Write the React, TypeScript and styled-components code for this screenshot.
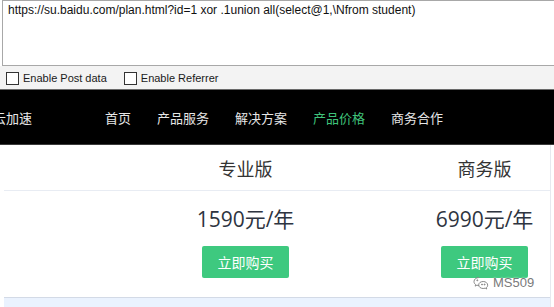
import React from "react";
import styled, { createGlobalStyle } from "styled-components";

const GlobalStyle = createGlobalStyle`
  html, body {
    margin: 0;
    padding: 0;
    background: #fff;
    overflow: hidden;
  }
  body {
    width: 554px;
    height: 307px;
    font-family: "Liberation Sans", "Noto Sans CJK SC", sans-serif;
  }
`;

const Page = styled.div`
  width: 554px;
  height: 307px;
  overflow: hidden;
  display: flex;
  flex-direction: column;
`;

const UrlBox = styled.div`
  height: 66px;
  margin-left: 2px;
  border: 1px solid #a8a8a8;
  border-right: none;
  background: #fff;
  padding: 2px 5px;
  font-size: 12px;
  line-height: 14px;
  color: #111;
  white-space: nowrap;
  box-sizing: border-box;
`;

const Options = styled.div`
  height: 24px;
  background: #f3f3f3;
  display: flex;
  align-items: center;
  gap: 17px;
  padding: 1px 0 0 6px;
  border-bottom: 1px solid #6a6a6a;
  box-sizing: border-box;
`;

const Check = styled.label`
  display: flex;
  align-items: center;
  gap: 4px;
  font-size: 11px;
  color: #1a1a1a;
`;

const Box = styled.span`
  width: 11px;
  height: 11px;
  border: 1px solid #333;
  background: #fff;
`;

const Nav = styled.nav`
  height: 55px;
  background: #000;
  display: flex;
  align-items: center;
  border-bottom: 1px solid #3a3a3a;
  box-sizing: border-box;
  font-family: "Noto Sans CJK SC", sans-serif;
  font-size: 13px;
`;

const Logo = styled.div`
  margin-left: -7px;
  color: #e8e8e8;
  width: 112px;
`;

const NavList = styled.div`
  display: flex;
  gap: 26px;
`;

const NavItem = styled.span<{ $active?: boolean }>`
  color: ${(p) => (p.$active ? "#3fc37b" : "#e6e6e6")};
`;

const Table = styled.div`
  position: relative;
  flex: 1;
  margin-left: 4px;
  width: 546px;
  border-right: 1px solid #e6e9ef;
  overflow: hidden;
  font-family: "Noto Sans CJK SC", sans-serif;
`;

const Row = styled.div<{ $h: number; $line?: boolean; $top?: boolean }>`
  display: grid;
  grid-template-columns: 122px 239px 239px;
  height: ${(p) => p.$h}px;
  align-items: ${(p) => (p.$top ? "start" : "center")};
  padding-top: ${(p) => (p.$top ? "1px" : "0")};
  border-bottom: ${(p) => (p.$line ? "1px solid #e8ecf3" : "none")};
  box-sizing: border-box;
`;

const Cell = styled.div`
  display: flex;
  justify-content: center;
  align-items: center;
`;

const Title = styled.div`
  font-size: 18px;
  color: #333;
`;

const Price = styled.div`
  font-size: 21px;
  color: #2e3440;
  font-family: "Open Sans", "Noto Sans CJK SC", sans-serif;
`;

const BuyButton = styled.button`
  width: 87px;
  height: 32px;
  border: none;
  border-radius: 2px;
  background: #3ec97f;
  color: #fff;
  font-family: "Noto Sans CJK SC", sans-serif;
  font-size: 14px;
  padding: 0;
`;

const Band = styled.div`
  height: 11px;
  border-top: 1px solid #d3dae6;
  background: #eaf2fe;
`;

const Watermark = styled.div`
  position: absolute;
  left: 469px;
  top: 130px;
  display: flex;
  align-items: center;
  gap: 4px;
  font-family: "Liberation Sans", sans-serif;
  font-size: 13px;
  color: #7a7a7a;
  text-shadow: 0 0 2px #fff;
`;

const plans = [
  { name: "专业版", price: "1590元/年" },
  { name: "商务版", price: "6990元/年" },
];

function WeChat() {
  return (
    <svg width="16" height="14" viewBox="0 0 16 14" fill="none" stroke="#888" strokeWidth="1">
      <path d="M6 1.5C3 1.5 1 3.4 1 5.6c0 1.2.6 2.2 1.6 3l-.4 1.5 1.7-.9c.6.2 1.3.3 2 .3" />
      <path d="M10.2 5.5c2.6 0 4.5 1.7 4.5 3.7 0 1-.5 1.9-1.3 2.5l.3 1.3-1.5-.8c-.6.2-1.3.3-2 .3-2.6 0-4.5-1.6-4.5-3.6s2-3.4 4.5-3.4z" />
      <circle cx="4.3" cy="4.3" r=".5" fill="#888" />
      <circle cx="9" cy="8.5" r=".5" fill="#888" />
      <circle cx="11.6" cy="8.5" r=".5" fill="#888" />
    </svg>
  );
}

export default function App() {
  return (
    <Page>
      <GlobalStyle />
      <UrlBox>https://su.baidu.com/plan.html?id=1 xor .1union all(select@1,\Nfrom student)</UrlBox>
      <Options>
        <Check>
          <Box />
          Enable Post data
        </Check>
        <Check>
          <Box />
          Enable Referrer
        </Check>
      </Options>
      <Nav>
        <Logo>云加速</Logo>
        <NavList>
          <NavItem>首页</NavItem>
          <NavItem>产品服务</NavItem>
          <NavItem>解决方案</NavItem>
          <NavItem $active>产品价格</NavItem>
          <NavItem>商务合作</NavItem>
        </NavList>
      </Nav>
      <Table>
        <Row $h={46} $line>
          <Cell />
          {plans.map((p) => (
            <Cell key={p.name}>
              <Title>{p.name}</Title>
            </Cell>
          ))}
        </Row>
        <Row $h={54}>
          <Cell />
          {plans.map((p) => (
            <Cell key={p.name}>
              <Price>{p.price}</Price>
            </Cell>
          ))}
        </Row>
        <Row $h={52} $top>
          <Cell />
          {plans.map((p) => (
            <Cell key={p.name}>
              <BuyButton>立即购买</BuyButton>
            </Cell>
          ))}
        </Row>
        <Band />
        <Watermark>
          <WeChat />
          MS509
        </Watermark>
      </Table>
    </Page>
  );
}
